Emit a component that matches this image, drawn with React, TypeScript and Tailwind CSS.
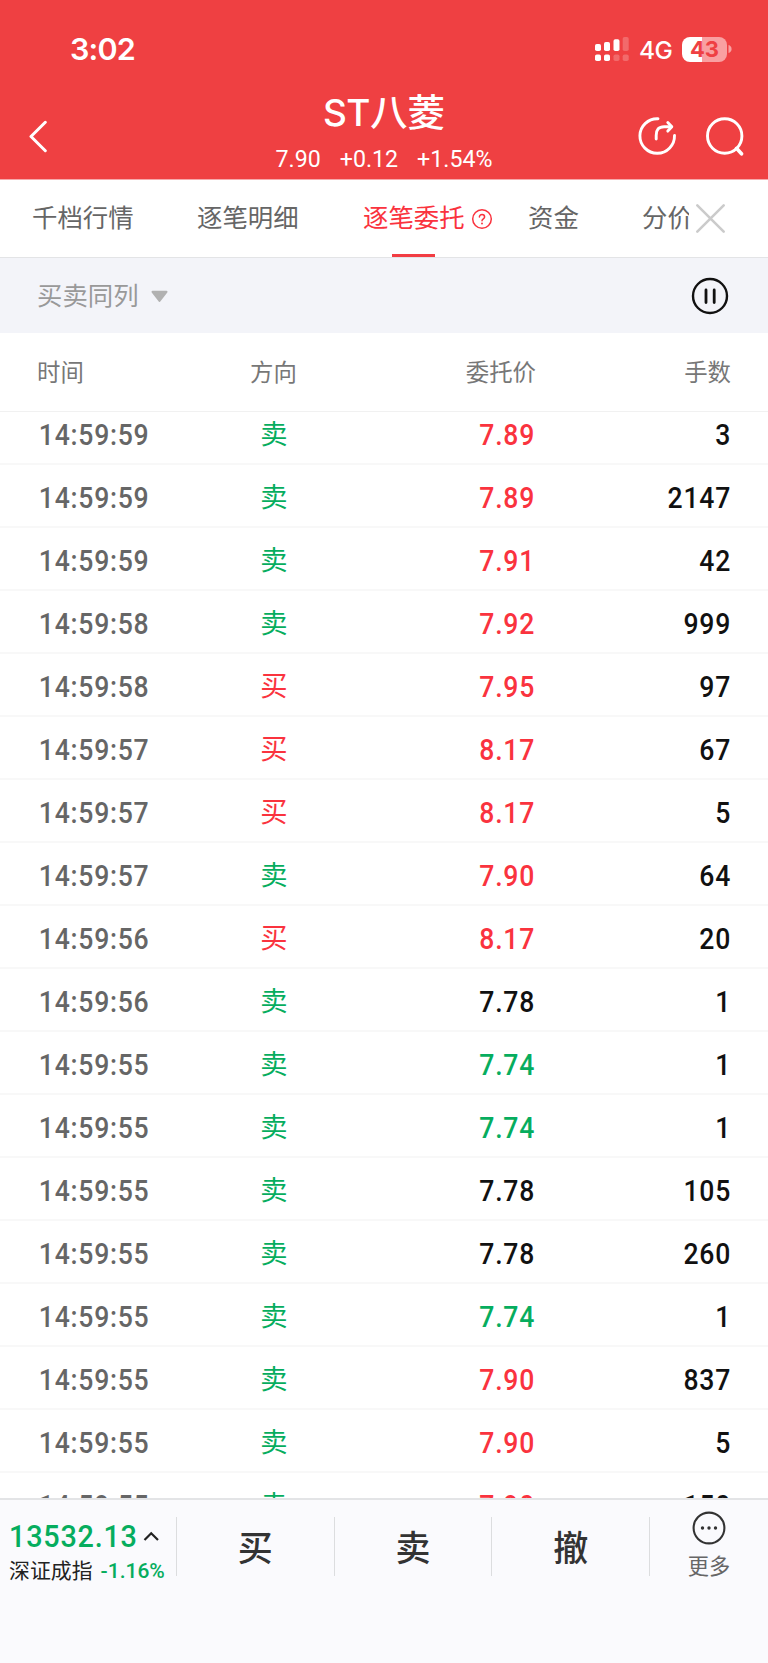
import clsx from 'clsx';

type Side = '买' | '卖';
type Trend = 'up' | 'down' | 'flat';

interface Order {
  time: string;
  side: Side;
  price: string;
  trend: Trend;
  lots: number;
}

const orders: Order[] = [
  { time: '14:59:59', side: '卖', price: '7.89', trend: 'up', lots: 3 },
  { time: '14:59:59', side: '卖', price: '7.89', trend: 'up', lots: 2147 },
  { time: '14:59:59', side: '卖', price: '7.91', trend: 'up', lots: 42 },
  { time: '14:59:58', side: '卖', price: '7.92', trend: 'up', lots: 999 },
  { time: '14:59:58', side: '买', price: '7.95', trend: 'up', lots: 97 },
  { time: '14:59:57', side: '买', price: '8.17', trend: 'up', lots: 67 },
  { time: '14:59:57', side: '买', price: '8.17', trend: 'up', lots: 5 },
  { time: '14:59:57', side: '卖', price: '7.90', trend: 'up', lots: 64 },
  { time: '14:59:56', side: '买', price: '8.17', trend: 'up', lots: 20 },
  { time: '14:59:56', side: '卖', price: '7.78', trend: 'flat', lots: 1 },
  { time: '14:59:55', side: '卖', price: '7.74', trend: 'down', lots: 1 },
  { time: '14:59:55', side: '卖', price: '7.74', trend: 'down', lots: 1 },
  { time: '14:59:55', side: '卖', price: '7.78', trend: 'flat', lots: 105 },
  { time: '14:59:55', side: '卖', price: '7.78', trend: 'flat', lots: 260 },
  { time: '14:59:55', side: '卖', price: '7.74', trend: 'down', lots: 1 },
  { time: '14:59:55', side: '卖', price: '7.90', trend: 'up', lots: 837 },
  { time: '14:59:55', side: '卖', price: '7.90', trend: 'up', lots: 5 },
  { time: '14:59:55', side: '卖', price: '7.90', trend: 'up', lots: 150 },
];

const trendColor: Record<Trend, string> = {
  up: 'text-[#fa333e]',
  down: 'text-[#06ad5e]',
  flat: 'text-[#111111]',
};

function StatusBar() {
  return (
    <div className="flex h-[98px] items-center pl-[70px] pr-9 text-white">
      <span className="font-['Inter'] text-[30.5px] font-semibold leading-none tracking-[-0.8px]">3:02</span>
      <div className="ml-auto flex items-center">
        <svg width="34" height="26" viewBox="0 0 34 26" fill="#fff">
          <rect x="0" y="8" width="6" height="7" rx="1.8" />
          <rect x="9" y="6" width="6" height="9" rx="1.8" />
          <rect x="18.5" y="3.3" width="6" height="11.7" rx="1.8" />
          <rect x="27.7" y="1" width="6" height="14" rx="1.8" opacity="0.22" />
          <rect x="0" y="18.5" width="6" height="6.5" rx="1.8" />
          <rect x="9" y="18.5" width="6" height="6.5" rx="1.8" />
          <rect x="18.5" y="18.5" width="6" height="6.5" rx="1.8" opacity="0.22" />
          <rect x="27.7" y="18.5" width="6" height="6.5" rx="1.8" opacity="0.22" />
        </svg>
        <span className="ml-[10px] mt-[3px] w-[43px] font-['Inter'] text-[24.5px] font-medium leading-none tracking-[-0.5px]">4G</span>
        <div className="flex items-center">
          <div className="flex h-[25px] w-[45px] items-center justify-center rounded-[8px] bg-[linear-gradient(90deg,#fff_20px,#f9a0a1_20px)]">
            <span className="font-['Inter'] text-[22px] font-bold leading-none text-[#ef4043]">43</span>
          </div>
          <svg width="5" height="10" viewBox="0 0 5 10">
            <path d="M1.5 1C3.4 1.6 4.6 3 4.6 5S3.4 8.4 1.5 9z" fill="#f9a0a1" />
          </svg>
        </div>
      </div>
    </div>
  );
}

function TitleBar() {
  return (
    <div className="flex h-[81px] justify-between pl-[29px] pr-[23px] text-white">
      <svg className="mt-[22px] shrink-0" width="102" height="33" viewBox="0 0 102 33" fill="none" stroke="#fff" strokeWidth="3" strokeLinecap="round" strokeLinejoin="round">
        <path d="M16.3 2.3 2 16.5 16.3 30.7" />
      </svg>
      <div className="flex flex-col items-center">
        <h1 className="-mt-[5px] flex h-[34px] items-center text-[37.5px] font-medium leading-[34px]">
          <span className="mt-[5px] font-['Inter'] text-[37px] tracking-[-0.6px]">ST</span>
          <span className="font-['Noto_Sans_CJK_SC']">八菱</span>
        </h1>
        <div className="mt-[19px] flex gap-[19px] font-['Roboto'] text-[23.2px] leading-[26px]">
          <span>7.90</span>
          <span>+0.12</span>
          <span>+1.54%</span>
        </div>
      </div>
      <div className="mt-[18px] flex gap-[28px]">
        <svg width="40" height="40" viewBox="0 0 40 40" fill="none" stroke="#fff" strokeWidth="2.9" strokeLinecap="round" strokeLinejoin="round">
          <path d="M21 2.7A17.3 17.3 0 1 0 37.5 19.4" />
          <path d="M19.2 23v-3.5c0-6 2.6-8.8 8-8.8h7" />
          <path d="M30.8 6.6 34.8 10.7l-4 4.4" />
        </svg>
        <svg width="40" height="40" viewBox="0 0 40 40" fill="none" stroke="#fff" strokeWidth="2.9" strokeLinecap="round">
          <circle cx="19.7" cy="20" r="17.2" />
          <path d="m31.5 32.3 5 5.5" strokeWidth="3.6" />
        </svg>
      </div>
    </div>
  );
}

function Tabs() {
  return (
    <nav className="flex h-[78px] items-center border-b border-[#e3e4e6] bg-white pl-8 text-[25.4px] leading-[30px] text-[#666]">
      <span className="-mt-[5px] w-[165px]">千档行情</span>
      <span className="-mt-[5px] w-[166px]">逐笔明细</span>
      <div className="relative flex h-full w-[165px] items-center text-[#fa333e]">
        <span className="-mt-[5px]">逐笔委托</span>
        <svg className="ml-[6px]" width="22" height="22" viewBox="0 0 22 22" fill="none" stroke="currentColor" strokeWidth="1.5" strokeLinecap="round">
          <circle cx="11" cy="11" r="9.3" />
          <path d="M8.4 9.1c0-1.6 1.1-2.6 2.6-2.6s2.6 1 2.6 2.4c0 1.9-2.6 1.9-2.6 3.9" />
          <path d="M11 15.5v.1" strokeWidth="1.9" />
        </svg>
        <div className="absolute bottom-0 left-[29px] h-[3px] w-[43px] bg-[#f23d43]" />
      </div>
      <span className="-mt-[5px] w-[114px]">资金</span>
      <span className="-mt-[5px] w-[47px] overflow-hidden whitespace-nowrap">分价</span>
      <svg className="ml-[6px]" width="31" height="31" viewBox="0 0 31 31" stroke="#cbcbcb" strokeWidth="2.6" strokeLinecap="round">
        <path d="m2.3 2.3 26.4 26.4M28.7 2.3 2.3 28.7" />
      </svg>
    </nav>
  );
}

function FilterBar() {
  return (
    <div className="flex h-[75px] items-center justify-between bg-[#f3f4f9] pl-[37px] pr-[39.5px]">
      <div className="flex items-center text-[25.4px] leading-[30px] text-[#999]">
        <span className="-mt-[3px]">买卖同列</span>
        <svg className="ml-3 mt-[2px]" width="17" height="13" viewBox="0 0 17 13" fill="#b1b1b1" stroke="#b1b1b1" strokeLinejoin="round" strokeWidth="2">
          <path d="M1.5 1.8h14L8.5 11z" />
        </svg>
      </div>
      <svg width="38" height="38" viewBox="0 0 38 38" fill="none" stroke="#111" strokeLinecap="round">
        <circle cx="19" cy="19" r="17" strokeWidth="2.4" />
        <path d="M15 13v12.5M23.2 13v12.5" strokeWidth="2.8" />
      </svg>
    </div>
  );
}

function OrderRow({ order }: { order: Order }) {
  return (
    <div className="grid h-[63px] shrink-0 grid-cols-[213px_48px_237px_1fr] items-center border-b-2 border-[#f8f8f8] px-[37px] pt-[5px] font-['Roboto'] text-[29.5px] font-medium leading-[34px] tracking-[0.85px]">
      <span className="origin-left scale-x-90 pl-[2px] text-[#666]">{order.time}</span>
      <span
        className={clsx(
          "-mt-[6px] text-center font-['Noto_Sans_CJK_SC'] text-[27.3px] font-normal tracking-normal",
          order.side === '买' ? 'text-[#fa333e]' : 'text-[#06ad5e]'
        )}
      >
        {order.side}
      </span>
      <span className={clsx('origin-right scale-x-90 text-right', trendColor[order.trend])}>{order.price}</span>
      <span className="origin-right scale-x-90 text-right text-[#111]">{order.lots}</span>
    </div>
  );
}

function OrderList() {
  return (
    <section className="flex h-[1165px] flex-col bg-white">
      <div className="grid h-[79px] shrink-0 grid-cols-[213px_46px_240px_1fr] items-center border-b border-[#f1f1f1] px-[37px] pb-[2px] text-[23.4px] leading-[30px] text-[#777]">
        <span>时间</span>
        <span className="whitespace-nowrap">方向</span>
        <span className="text-right">委托价</span>
        <span className="text-right">手数</span>
      </div>
      {/* scrolled slightly, so the first row is cut at the top */}
      <div className="flex flex-1 flex-col overflow-hidden">
        <div className="-mt-[10px] flex flex-col">
          {orders.map((order, index) => (
            <OrderRow key={index} order={order} />
          ))}
        </div>
      </div>
    </section>
  );
}

function BottomBar() {
  return (
    <footer className="flex h-[165px] border-t-2 border-[#e3e4e6] bg-[#fafafd] text-[#333]">
      <div className="w-[176px] shrink-0 pl-[9px] pt-[18px]">
        <div className="flex items-center font-['Roboto'] text-[32px] font-medium leading-[36px] tracking-[0.85px] text-[#06ad5e]">
          <span className="w-[134px] origin-left scale-x-90">13532.13</span>
          <svg width="16" height="11" viewBox="0 0 16 11" fill="none" stroke="#222" strokeWidth="2.2">
            <path d="m1.5 9 6.7-6.8L15 9" />
          </svg>
        </div>
        <div className="mt-[4px] flex items-center whitespace-nowrap text-[20.9px] leading-[24px] text-[#222]">
          <span className="-mt-[3px]">深证成指</span>
          <span className="ml-[8px] mt-px font-['Roboto'] text-[21px] font-medium text-[#06ad5e]">-1.16%</span>
        </div>
      </div>
      {['买', '卖', '撤'].map((label) => (
        <button
          key={label}
          className="mt-[17px] flex h-[59px] w-[157.7px] items-center justify-center border-l border-[#dcdddf] pb-0.5 text-[35px] font-medium leading-none"
        >
          {label}
        </button>
      ))}
      <button className="mt-[17px] flex h-[59px] flex-1 flex-col items-center border-l border-[#dcdddf]">
        <svg className="-mt-[6px] shrink-0" width="34" height="34" viewBox="0 0 34 34" fill="none" stroke="#333" strokeWidth="2.1">
          <circle cx="17" cy="17" r="15.4" />
          <path d="M10.5 17h.01M17 17h.01M23.5 17h.01" strokeWidth="3.4" strokeLinecap="round" />
        </svg>
        <span className="mt-[6px] text-[21.2px] leading-[28px] text-[#666]">更多</span>
      </button>
    </footer>
  );
}

export default function App() {
  return (
    <div className="flex h-[1663px] w-[768px] flex-col overflow-hidden bg-white font-['Noto_Sans_CJK_SC',sans-serif]">
      <header className="h-[180px] shrink-0 border-b border-[#f6a9ab] bg-[#ef4042]">
        <StatusBar />
        <TitleBar />
      </header>
      <Tabs />
      <FilterBar />
      <OrderList />
      <BottomBar />
    </div>
  );
}
